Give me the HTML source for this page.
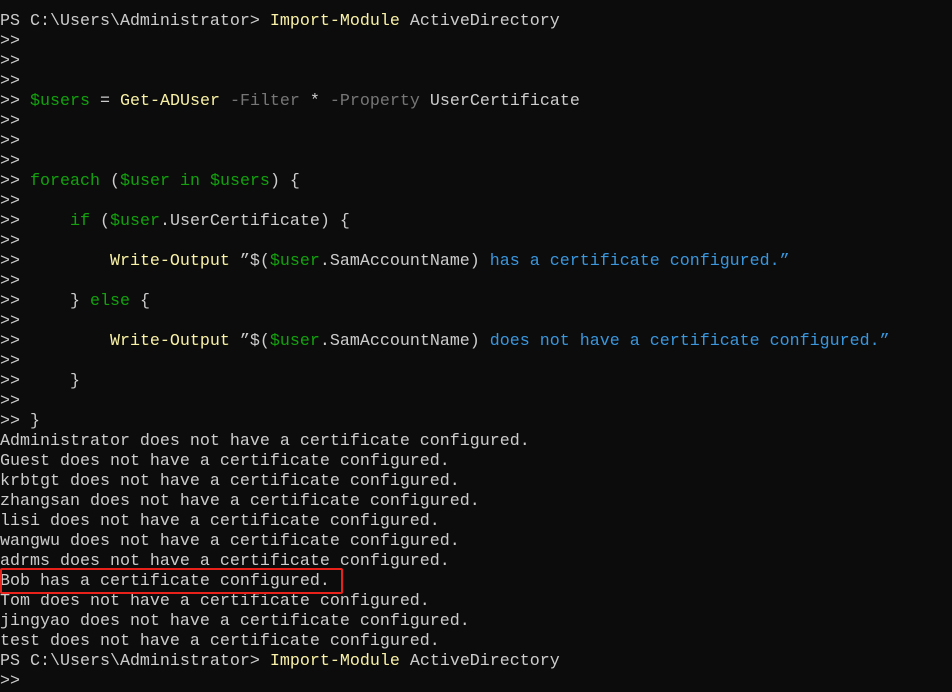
<!DOCTYPE html>
<html><head><meta charset="utf-8"><style>
html,body{margin:0;padding:0;background:#0c0c0c;width:952px;height:691px;overflow:hidden}
pre{margin:0;position:absolute;left:0;top:12px;font-family:"Liberation Mono","Noto Sans CJK SC",monospace;font-size:16.67px;line-height:20px;color:#cccccc;white-space:pre}
.y{color:#f9f1a5}.g{color:#13a10e}.d{color:#767676}.b{color:#3a96dd}
.box{position:absolute;left:0;top:568px;width:339px;height:22px;border:2px solid #e8211a;border-radius:2px;box-sizing:content-box}
</style></head><body>
<pre>PS C:\Users\Administrator&gt; <span class="y">Import-Module</span> ActiveDirectory
&gt;&gt;
&gt;&gt;
&gt;&gt;
&gt;&gt; <span class="g">$users</span> = <span class="y">Get-ADUser</span> <span class="d">-Filter</span> * <span class="d">-Property</span> UserCertificate
&gt;&gt;
&gt;&gt;
&gt;&gt;
&gt;&gt; <span class="g">foreach</span> (<span class="g">$user</span> <span class="g">in</span> <span class="g">$users</span>) {
&gt;&gt;
&gt;&gt;     <span class="g">if</span> (<span class="g">$user</span>.UserCertificate) {
&gt;&gt;
&gt;&gt;         <span class="y">Write-Output</span> ”$(<span class="g">$user</span>.SamAccountName) <span class="b">has a certificate configured.”</span>
&gt;&gt;
&gt;&gt;     } <span class="g">else</span> {
&gt;&gt;
&gt;&gt;         <span class="y">Write-Output</span> ”$(<span class="g">$user</span>.SamAccountName) <span class="b">does not have a certificate configured.”</span>
&gt;&gt;
&gt;&gt;     }
&gt;&gt;
&gt;&gt; }
Administrator does not have a certificate configured.
Guest does not have a certificate configured.
krbtgt does not have a certificate configured.
zhangsan does not have a certificate configured.
lisi does not have a certificate configured.
wangwu does not have a certificate configured.
adrms does not have a certificate configured.
Bob has a certificate configured.
Tom does not have a certificate configured.
jingyao does not have a certificate configured.
test does not have a certificate configured.
PS C:\Users\Administrator&gt; <span class="y">Import-Module</span> ActiveDirectory
&gt;&gt;</pre>
<div class="box"></div>
</body></html>
